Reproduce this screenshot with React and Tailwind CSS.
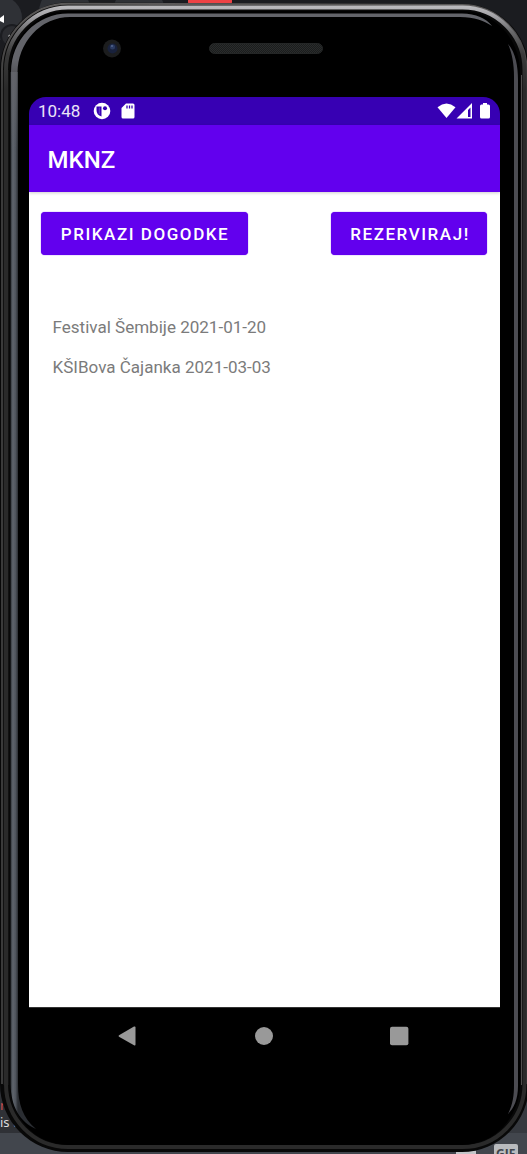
import React from "react";

function Backdrop() {
  return (
    <svg className="absolute inset-0" width="527" height="1154" viewBox="0 0 527 1154">
      <rect width="527" height="1154" fill="#1b1c20" />
      <circle cx="0" cy="18" r="22" fill="#2f3136" />
      <circle cx="65" cy="12" r="26" fill="#2f3136" />
      <circle cx="139" cy="12" r="26" fill="#2f3136" />
      <circle cx="12" cy="36" r="12" fill="#1b1c20" />
      <circle cx="12" cy="36" r="10" fill="#2b2c30" />
      <path d="M8 36L10 34.500V37.500Z" fill="#ddd" />
      <path d="M0 18L4 15V23L0 21Z" fill="#fff" />
      <rect x="188" y="-10" width="44" height="18" rx="6" fill="#ed4245" />
      <rect x="0" y="1060" width="100" height="73" fill="#2f3136" />
      <rect x="440" y="1060" width="87" height="73" fill="#36393f" />
      <rect x="0" y="1133" width="527" height="21" fill="#42464d" />
      <rect x="456" y="1150.500" width="20" height="6" fill="#c4c6c9" />
      <rect x="494" y="1144" width="24" height="14" rx="2" fill="#b9bbbe" />
    </svg>
  );
}

function DeviceFrame() {
  return (
    <svg className="absolute inset-0" width="527" height="1154" viewBox="0 0 527 1154" fill="none">
      <defs>
        <linearGradient id="edge" x1="0" y1="0" x2="0" y2="90" gradientUnits="userSpaceOnUse">
          <stop offset=".04" stopColor="#c2c1c4" />
          <stop offset=".18" stopColor="#a3a2a6" />
          <stop offset=".35" stopColor="#6a6a6c" />
          <stop offset=".6" stopColor="#3a3a3a" />
          <stop offset="1" stopColor="#2a2a2a" />
        </linearGradient>
        <linearGradient id="rim" x1="0" y1="0" x2="0" y2="90" gradientUnits="userSpaceOnUse">
          <stop offset="0" stopColor="#5c5a5a" />
          <stop offset="1" stopColor="#3a3a3a" />
        </linearGradient>
        <linearGradient id="glass" x1="10" y1="0" x2="18" y2="0" gradientUnits="userSpaceOnUse">
          <stop offset="0" stopColor="#24272b" />
          <stop offset=".35" stopColor="#5f656d" />
          <stop offset=".7" stopColor="#50555d" />
          <stop offset="1" stopColor="#2a2d32" />
        </linearGradient>
        <linearGradient id="shine" x1="0" y1="60" x2="0" y2="150" gradientUnits="userSpaceOnUse">
          <stop offset="0" stopColor="#63646a" />
          <stop offset="1" stopColor="#63646a" stopOpacity="0" />
        </linearGradient>
        <pattern id="mesh" width="2" height="2" patternUnits="userSpaceOnUse">
          <rect width="2" height="2" fill="#1b1d1d" />
          <rect width="1" height="1" fill="#2a2c2c" />
          <rect x="1" y="1" width="1" height="1" fill="#2a2c2c" />
        </pattern>
      </defs>
      <path d="M0 70A68 67.500 0 0 1 68 2.500L462 4A67 67 0 0 1 529 71V1084A67 68 0 0 1 462 1152H68A68 68 0 0 1 0 1084Z" fill="#080808" />
      <path d="M2 1084V70A66 66 0 0 1 68 3.800L462 5A65 65 0 0 1 526.500 71V1084" stroke="url(#rim)" strokeWidth="2" />
      <path d="M6 90V1084A62 63 0 0 0 68 1147H462A62 63 0 0 0 524.500 1084V90" stroke="#2a2a2a" strokeWidth="4" />
      <path d="M6 90V70A62 62.500 0 0 1 68 7.500H462A62 62.500 0 0 1 524.500 70V90" stroke="url(#edge)" strokeWidth="4" />
      <path d="M521.500 75V1085" stroke="#504f4f" />
      <path d="M3.500 70V1085M8.500 70V1085" stroke="#111" />
      <path d="M10 72A58 61 0 0 1 68 11H462A58 61 0 0 1 520 72V1084A58 61 0 0 1 462 1145H68A58 61 0 0 1 10 1084Z" fill="#000" />
      <path d="M10.500 72V1084C11 1107 20 1122 36 1129C23 1118 18 1104 18 1084V72Z" fill="url(#glass)" />
      <path d="M11 150V72A57 58.500 0 0 1 68 13.500H462C476 14 486 18 492 26C483 20 475 17.500 460 17H70A52.500 56 0 0 0 17.500 73V150Z" fill="url(#shine)" />
      <path d="M508 44C516 53 518 67 518 80V1086C518 1099 514 1108 508 1114C513 1104 514 1095 514 1085V77C514 64 512 53 508 44Z" fill="#4c4c52" />
      <circle cx="112" cy="48.500" r="9" fill="#1c1d1e" />
      <circle cx="112.500" cy="48.500" r="5" fill="#18213c" />
      <circle cx="112.500" cy="47" r="2.500" fill="#2b3b62" />
      <circle cx="112" cy="46" r=".8" fill="#6f84ad" />
      <rect x="209.500" y="43.500" width="113" height="10" rx="5" fill="url(#mesh)" stroke="#242626" />
    </svg>
  );
}

function StatusBar() {
  return (
    <div className="flex h-7 shrink-0 items-center bg-[#3700b3] pl-[9px] pr-[9px] text-[17px] leading-none text-white/90">
      <span className="w-[55px] pt-px">10:48</span>
      <svg width="18" height="18" viewBox="0 0 18 18">
        <circle cx="9" cy="9" r="8.300" fill="#fff" />
        <path d="M3.500 4.500H8.500V14.500Q3.500 13 3.500 8Z" fill="#3700b3" />
        <path d="M5.800 5.500H6.800V12H5.800Z" fill="#fff" opacity=".25" />
        <circle cx="12" cy="6.200" r="2" fill="#3700b3" />
      </svg>
      <svg className="ml-[10px]" width="15" height="18" viewBox="0 0 15 18">
        <path d="M5 1.500H12Q13.500 1.500 13.500 3V15Q13.500 16.500 12 16.500H2Q.5 16.500 .5 15V6Z" fill="#fff" />
        <path d="M6 3.500V6.500M8.500 3.500V6.500M11 3.500V6.500" stroke="#3700b3" strokeWidth="1.300" />
      </svg>
      <svg className="ml-auto" width="54" height="18" viewBox="0 0 54 18" fill="#fff">
        <path d="M.5 5.200Q9.500 -2.200 18.500 5.200L9.500 16Z" />
        <path fillRule="evenodd" d="M35 1V16.500H19.500ZM31 8V15H33.500V5.500Z" />
        <path d="M46 2.500V1H50V2.500H51.500Q53 2.500 53 4V15Q53 16.500 51.500 16.500H44.500Q43 16.500 43 15V4Q43 2.500 44.500 2.500Z" />
      </svg>
    </div>
  );
}

function Button({ children, className }) {
  return (
    <button className={`h-[43px] rounded-[4px] bg-[#6200ee] pt-[2px] text-[17px] font-medium leading-none text-white shadow-[0_0_1px_#6200ee] ${className}`}>
      {children}
    </button>
  );
}

export default function App() {
  const events = ["Festival Šembije 2021-01-20", "KŠIBova Čajanka 2021-03-03"];
  return (
    <div className="relative h-[1154px] w-[527px] overflow-hidden bg-[#1b1c20] font-['Roboto',sans-serif]">
      <Backdrop />
      <span className="absolute left-0 top-[1114px] font-['Noto_Sans',sans-serif] text-[13px] leading-4 text-[#dcddde]">is t</span>
      <span className="absolute left-0 top-[1097px] font-['Noto_Sans',sans-serif] text-[13px] leading-4 text-[#c94c4c]">n</span>
      <span className="absolute left-[496px] top-[1146px] font-['Open_Sans',sans-serif] text-[12px] font-bold leading-4 text-[#40444b]">GIF</span>
      <DeviceFrame />
      <div className="relative flex h-full flex-col pl-[29px] pr-[27px] pt-[97px]">
        <main className="flex h-[910px] flex-col overflow-hidden rounded-t-[17px]">
          <StatusBar />
          <header className="relative flex h-[67px] shrink-0 items-center bg-[#6200ee] pl-[18.500px] text-[24px] font-medium leading-none text-white shadow-[0_1px_3px_rgba(0,0,0,0.2)]">
            <h1 className="pt-[3px]">MKNZ</h1>
          </header>
          <section className="grow bg-white">
            <div className="flex justify-between pl-3 pr-[13px] pt-5">
              <Button className="w-[207px] pl-[1px] tracking-[1.550px]">PRIKAZI DOGODKE</Button>
              <Button className="w-[156px] pl-[2px] tracking-[1.550px]">REZERVIRAJ!</Button>
            </div>
            <ul className="pl-[23.500px] pt-[52px] text-[17.050px] leading-[40px] text-[#7b7b7b]">
              {events.map((event) => <li key={event}>{event}</li>)}
            </ul>
          </section>
        </main>
        <nav className="flex h-[57px] items-center justify-between border-t border-[#333] pl-[89px] pr-[91px]">
          <svg width="18" height="20" viewBox="0 0 18 20"><path d="M16 .5Q17.500 0 17.500 1.500V18.500Q17.500 20 16 19.300L1 10.800Q0 10 1 9.200Z" fill="#999" /></svg>
          <svg className="ml-[2px]" width="20" height="20" viewBox="0 0 20 20"><circle cx="10" cy="10" r="9" fill="#999" /></svg>
          <svg width="20" height="20" viewBox="0 0 20 20"><rect x="1" y=".8" width="18.400" height="18.400" rx="2" fill="#999" /></svg>
        </nav>
      </div>
    </div>
  );
}
